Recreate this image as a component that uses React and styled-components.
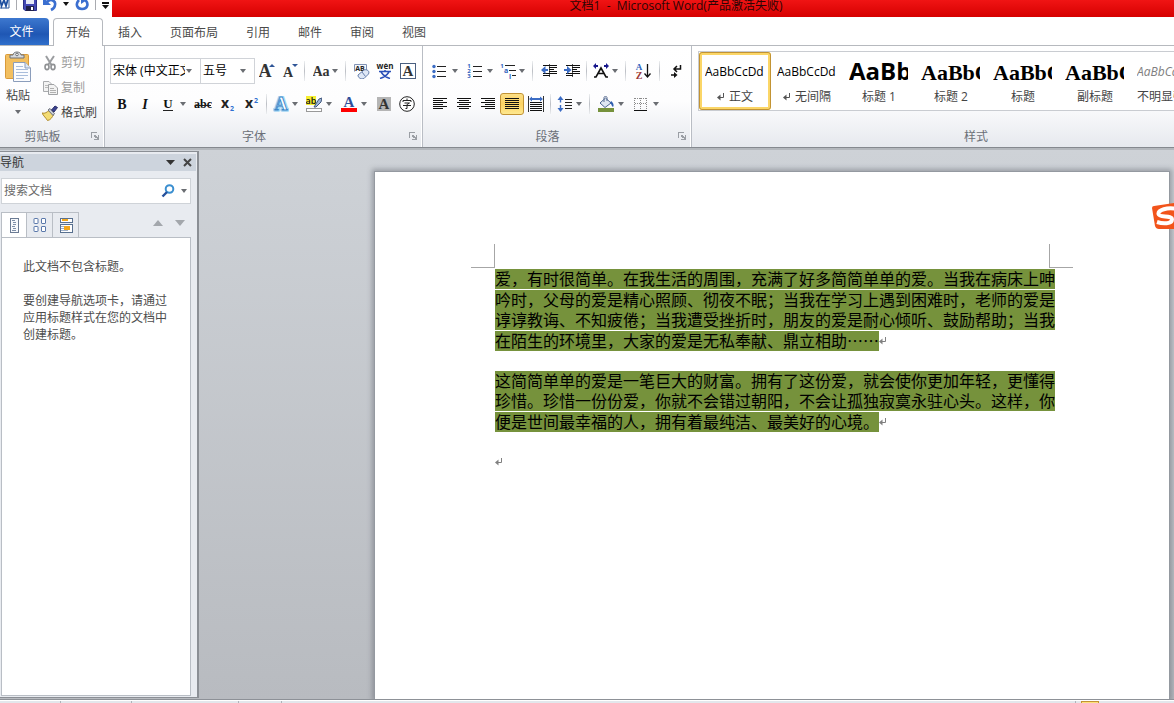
import React from "react";
import styled, { createGlobalStyle, css } from "styled-components";

const UI = `"Open Sans", "Noto Sans CJK SC", sans-serif`;
const SERIF = `"Liberation Serif", serif`;
const SANS = `"Open Sans", sans-serif`;

const GlobalStyle = createGlobalStyle`
  *, *::before, *::after { box-sizing: border-box; }
  html, body, #root { height: 100%; margin: 0; }
  body { font: 12px/16px ${UI}; color: #444; overflow: hidden; }
  button, input, select { font: inherit; color: inherit; }
  p { margin: 0; }
`;

/* ---------- window frame ---------- */

const Window = styled.div`
  display: flex;
  flex-direction: column;
  height: 100vh;
  overflow: hidden;
  background: #fff;
`;

const TitleBar = styled.header`
  display: flex;
  flex: none;
  height: 17px;
  overflow: hidden;
`;

const QuickAccess = styled.div`
  display: flex;
  flex: none;
  width: 112px;
  height: 8px;
  align-items: center;
  gap: 6px;
`;

const QuickButton = styled.button`
  display: block;
  padding: 0;
  border: 0;
  background: none;
  height: 16px;
  flex: none;
`;

const QuickRule = styled.span`
  width: 1px;
  height: 12px;
  background: #a9abb0;
`;

const TitleText = styled.h1`
  flex: 1;
  margin: 0;
  padding-left: 66px;
  background: linear-gradient(#f01414, #d60000);
  color: #2c0505;
  font-size: 12px;
  font-weight: 400;
  line-height: 12px;
  text-align: center;
  white-space: pre;
`;

const TabRow = styled.nav`
  display: flex;
  flex: none;
  gap: 2px;
  height: 29px;
  padding-top: 1px;
  border-bottom: 1px solid #b6b9be;
`;

const Tab = styled.button`
  height: 28px;
  padding: 0 12px;
  border: 1px solid transparent;
  border-bottom: 0;
  border-radius: 4px 4px 0 0;
  background: none;
  color: #4a4a4a;
  line-height: 24px;
  ${(p) => p.$active && css`
    background: #fff;
    border-color: #b6b9be;
  `}
`;

const FileTab = styled(Tab)`
  width: 49px;
  margin-right: 2px;
  padding: 0 6px 0 0;
  height: 27px;
  border: 0;
  border-radius: 0 4px 0 0;
  background: linear-gradient(#3d78cf, #1f57b4 60%, #2f6fcb);
  color: #fff;
`;

/* ---------- ribbon ---------- */

const Ribbon = styled.section`
  display: flex;
  flex: none;
  height: 102px;
  overflow: hidden;
  border-bottom: 1px solid #85898f;
  background: linear-gradient(#fff 0%, #fdfdfe 55%, #e6e9ee 100%);
`;

const Group = styled.section`
  display: flex;
  flex: none;
  flex-direction: column;
  width: ${(p) => p.$width}px;
  border-right: 1px solid #b9bdc4;
  box-shadow: inset -1px 0 #fff;
`;

const GroupBody = styled.div`
  display: flex;
  flex: 1;
  flex-direction: ${(p) => (p.$rows ? "column" : "row")};
  gap: ${(p) => (p.$rows ? 7 : 0)}px;
  padding: ${(p) => p.$pad || "12px 0 0 5px"};
`;

const GroupFoot = styled.footer`
  display: flex;
  height: 21px;
  padding: 0 4px 0 0;
  align-items: center;
  color: #6b7078;
`;

const GroupName = styled.span`
  flex: 1;
  padding-right: 6px;
  text-align: center;
`;

const Launcher = styled.button`
  display: flex;
  width: 9px;
  height: 9px;
  padding: 0;
  border: 0;
  background: none;
`;

const ToolRow = styled.div`
  display: flex;
  height: 26px;
  align-items: center;
`;

const Tool = styled.button`
  display: flex;
  flex: none;
  width: ${(p) => p.$width || 23}px;
  height: 22px;
  padding: 0;
  align-items: center;
  justify-content: center;
  border: 1px solid transparent;
  border-radius: 3px;
  background: none;
  ${(p) => p.$on && css`
    border-color: #c29334;
    background: linear-gradient(#fcdf86, #fdd363 50%, #fee88f);
  `}
`;

const Split = styled.button`
  display: grid;
  flex: none;
  grid-template-columns: ${(p) => (p.$tight ? 20 : 23)}px 8px;
  margin-right: ${(p) => (p.$tight ? 3 : 4)}px;
  height: 22px;
  padding: 0;
  place-items: center;
  border: 0;
  background: none;
`;

const Rule = styled.span`
  flex: none;
  width: 1px;
  height: 20px;
  margin: 0 4px 0 3px;
  background: linear-gradient(#eceef0, #bcbfc5 50%, #eceef0);
`;

const Combo = styled.label`
  display: grid;
  flex: none;
  grid-template-columns: 1fr 14px;
  width: ${(p) => p.$width}px;
  height: 26px;
  align-items: center;
  border: 1px solid #d0d3d8;
  background: #fff;
  & + & { border-left: 0; }
  svg { grid-area: 1 / 2; pointer-events: none; }
`;

const ComboSelect = styled.select`
  grid-area: 1 / 1 / 2 / 3;
  width: 100%;
  height: 24px;
  padding: 0 15px 0 2px;
  appearance: none;
  border: 0;
  background: none;
  color: #000;
`;

const PasteButton = styled.button`
  display: flex;
  flex-direction: column;
  width: 36px;
  height: 74px;
  padding: 1px 0 0;
  align-items: center;
  border: 0;
  background: none;
  line-height: 20px;
  svg + span { margin: 3px 0 4px; }
`;

const ClipList = styled.div`
  display: flex;
  flex-direction: column;
  padding-left: 6px;
`;

const ClipButton = styled.button`
  display: flex;
  height: 25px;
  padding: 0;
  gap: 3px;
  align-items: center;
  border: 0;
  background: none;
  color: ${(p) => (p.disabled ? "#9a9a9a" : "#444")};
`;

const Gallery = styled.div`
  display: flex;
  height: 60px;
  width: 568px;
  border: 1px solid #c9ccd1;
  background: #fff;
`;

const StyleCard = styled.button`
  display: flex;
  flex: none;
  flex-direction: column;
  width: 72px;
  height: 58px;
  padding: 0 3px;
  border: 3px solid transparent;
  border-radius: 3px;
  background: none;
  ${(p) => p.$on && css`
    border-color: #fbd667;
    outline: 1px solid #c29334;
    outline-offset: -1px;
  `}
`;

const Sample = styled.span`
  display: block;
  width: 59px;
  height: 34px;
  overflow: hidden;
  color: #000;
  font-size: 12px;
  line-height: 34px;
  white-space: nowrap;
  text-align: left;
  ${(p) => p.$kind === "h1" && css`
    font: 700 24px/32px ${SANS};
  `}
  ${(p) => p.$kind === "serif" && css`
    font: 700 22px/36px ${SERIF};
  `}
  ${(p) => p.$kind === "subtle" && css`
    color: #808080;
    font-style: italic;
  `}
`;

const StyleName = styled.span`
  display: flex;
  width: 60px;
  height: 16px;
  gap: 4px;
  align-items: center;
  justify-content: center;
  color: #444;
  white-space: nowrap;
`;

/* ---------- workspace ---------- */

const Workspace = styled.main`
  position: relative;
  display: flex;
  flex: 1;
  min-height: 0;
  overflow: hidden;
  background: linear-gradient(#ced2d7, #b8bbc0);
  border-top: 2px solid #b4b8bd;
`;

const NavPane = styled.aside`
  display: flex;
  flex: none;
  flex-direction: column;
  width: 199px;
  margin: 1px 0 1px;
  padding: 2px 6px 1px 1px;
  border: 1px solid #8b8f95;
  border-width: 1px 2px 1px 0;
  background: #e8ebf0;
`;

const NavHead = styled.header`
  display: flex;
  flex: none;
  height: 17px;
  margin: 0 -5px 7px -1px;
  padding-right: 4px;
  gap: 8px;
  align-items: center;
  background: #cdd4dd;
  color: #333;
`;

const NavTitle = styled.h2`
  flex: 1;
  margin: 0;
  font-size: 12px;
  font-weight: 400;
  line-height: 17px;
`;

const IconButton = styled.button`
  display: flex;
  padding: 0;
  border: 0;
  background: none;
`;

const SearchBox = styled.div`
  display: flex;
  flex: none;
  height: 26px;
  padding: 0 3px 0 2px;
  gap: 6px;
  align-items: center;
  border: 1px solid #cfd3d8;
  background: #fff;
`;

const SearchInput = styled.input`
  flex: 1;
  min-width: 0;
  padding: 0;
  border: 0;
  outline: 0;
  background: none;
  &::placeholder { color: #6a6a6a; opacity: 1; }
`;

const NavTabs = styled.div`
  display: flex;
  flex: none;
  height: 26px;
  margin-top: 8px;
  margin-bottom: -1px;
`;

const NavTab = styled.button`
  display: flex;
  width: 26px;
  padding: 0;
  align-items: center;
  justify-content: center;
  border: 1px solid #b9bec5;
  border-bottom-color: ${(p) => (p.$on ? "#fff" : "#b9bec5")};
  background: ${(p) => (p.$on ? "#fff" : "#e8ebf0")};
  & + & { border-left: 0; }
`;

const NavArrows = styled.div`
  display: flex;
  flex: 1;
  gap: 12px;
  padding: 0 6px 4px 0;
  align-items: center;
  justify-content: flex-end;
`;

const NavBody = styled.div`
  flex: 1;
  padding: 20px 20px 0 21px;
  border: 1px solid #b9bec5;
  background: #fff;
  color: #4d4d4d;
  line-height: 17px;
  p + p { margin-top: 17px; }
`;

const Sheet = styled.article`
  flex: 1;
  min-width: 0;
  margin: 21px 4px 0 175px;
  padding-top: 72px;
  border: 1px solid #9499a0;
  border-bottom: 0;
  border-width: 1px 1px 0 1px;
  background: #fff;
  box-shadow: 0 0 5px 2px rgba(90, 96, 105, 0.45);
`;

const Marks = styled.div`
  display: flex;
  margin: 0 96px 1px;
  justify-content: space-between;
`;

const Mark = styled.span`
  width: 24px;
  height: 24px;
  border: solid #a6a6a6;
  border-width: ${(p) => (p.$right ? "0 0 1px 1px" : "0 1px 1px 0")};
`;

const Text = styled.div`
  padding: 0 120px;
  color: #000;
  font: 16px/20px "Noto Sans CJK SC", sans-serif;
`;

const Paragraph = styled.p`
  min-height: 20px;
  margin-bottom: 20px;
`;

const Line = styled.span`
  display: flex;
  align-items: center;
  height: 20px;
  margin-top: ${(p) => (p.$split ? 1 : 0)}px;
  white-space: nowrap;
`;

const Highlight = styled.span`
  padding-bottom: 2px;
  background: #76923c;
  line-height: 18px;
`;

const InputBadge = styled.span`
  position: absolute;
  top: 51px;
  right: 0;
  width: 23px;
  height: 30px;
  overflow: hidden;
`;

const StatusBar = styled.footer`
  display: flex;
  flex: none;
  height: 4px;
  padding-top: 1px;
  border-top: 1px solid #8d9197;
  background: #e3e7ec;
  box-shadow: inset 0 1px #fff;
`;

const StatusCell = styled.span`
  flex: none;
  width: ${(p) => p.$width}px;
  border-right: 1px solid #aeb3b9;
`;

const StatusSpace = styled(StatusCell)`
  flex: 1;
`;

const ViewSwitch = styled.span`
  width: 18px;
  margin: 0 75px 0 5px;
  border: 1px solid #c29334;
  border-bottom: 0;
  background: #fde27a;
`;

/* ---------- drawings ---------- */

const Svg = ({ w = 16, h = 16, crisp, children }) => (
  <svg width={w} height={h} viewBox={`0 0 ${w} ${h}`} fill="none" aria-hidden="true"
    shapeRendering={crisp ? "crispEdges" : "auto"}>
    {children}
  </svg>
);

const Caret = ({ color = "#6a6d72", w = 6, h = 4 }) => (
  <Svg w={w} h={h}><path d={`M0 0H${w}L${w / 2} ${h}Z`} fill={color} /></Svg>
);

const Letter = ({ x = 8, y = 13, size = 15, fill = "#333", font = SERIF, weight = 700, children, ...rest }) => (
  <text x={x} y={y} fontSize={size} fill={fill} fontFamily={font} fontWeight={weight} textAnchor="middle" {...rest}>
    {children}
  </text>
);

const WordLogo = () => (
  <Svg w={10}>
    <path d="M0 1H9V12H0" fill="#fff" stroke="#2b579a" />
    <path d="M0 3L1.500 10L4 4L6 10L8 3" stroke="#1d4f9f" strokeWidth="1.800" />
  </Svg>
);
const SaveIcon = () => (
  <Svg w={14}>
    <path d="M0.500 1H13.500V14.500H2L0.500 13Z" fill="#4348b4" stroke="#2b2f86" />
    <rect x="3" y="1" width="8" height="7" fill="#e6e9f7" />
    <rect x="3" y="10" width="8" height="5" fill="#20204a" />
    <rect x="8" y="11" width="2" height="3" fill="#fff" />
  </Svg>
);
const UndoIcon = () => (
  <Svg w={14}>
    <path d="M4 6C8 2 13 5 12 9C12 11 10 13 8 14" stroke="#3b6fd0" strokeWidth="2.600" />
    <path d="M0 1V9H8Z" fill="#3b6fd0" />
  </Svg>
);
const RedoIcon = () => (
  <Svg w={14}>
    <path d="M4 4C0 8 2 13 7 13C13 13 14 7 10 4" stroke="#3b6fd0" strokeWidth="2.600" />
    <path d="M6 1V8L12 4Z" fill="#3b6fd0" />
  </Svg>
);
const MoreIcon = () => (
  <Svg w={7} h={16}><path d="M0 6H7V8H0ZM0 9H7L3.500 13Z" fill="#111" /></Svg>
);

const PasteIcon = () => (
  <Svg w={28} h={32}>
    <rect x="1.500" y="3.500" width="23" height="24" rx="1" fill="#f2bf60" stroke="#d99a3a" />
    <path d="M6 7V4H9C9 0 17 0 17 4H20V7Z" fill="#d7dade" stroke="#6d7176" />
    <circle cx="13" cy="3.500" r="1.300" fill="#fff" stroke="#6d7176" />
    <path d="M9.500 11.500H21L26.500 17V30.500H9.500Z" fill="#fbfcfe" stroke="#8b9dbb" />
    <path d="M21 11.500V17H26.500" fill="#dce6f4" stroke="#8b9dbb" />
    <path d="M12 15.500H19M12 18.500H24M12 21.500H24M12 24.500H24M12 27.500H20" stroke="#a9bddb" />
  </Svg>
);
const CutIcon = () => (
  <Svg>
    <path d="M4 1L9.500 10M12 1L6 10" stroke="#9b9da0" strokeWidth="2" />
    <ellipse cx="5" cy="12" rx="2" ry="2.600" stroke="#8f9194" strokeWidth="1.600" />
    <ellipse cx="11" cy="12" rx="2" ry="2.600" stroke="#8f9194" strokeWidth="1.600" />
  </Svg>
);
const CopyIcon = () => (
  <Svg>
    <path d="M1.500 1.500H7L9.500 4V11.500H1.500Z" fill="#f3f3f3" stroke="#a9abae" />
    <path d="M3 5.500H8M3 7.500H8" stroke="#bbb" />
    <path d="M6.500 4.500H12L15.500 8V14.500H6.500Z" fill="#f3f3f3" stroke="#a0a2a5" />
    <path d="M8 8.500H12M8 10.500H14M8 12.500H14" stroke="#b0b0b0" />
  </Svg>
);
const BrushIcon = () => (
  <Svg>
    <path d="M0 8C3 9 5 7 7 5.500L11.500 10C10 12 9 15 5.500 15.500C4 13 1.500 11 0 8Z" fill="#f3dc74" stroke="#b08b2c" />
    <path d="M6 5L8 3.500L12.500 8.500L11 10.500Z" fill="#c8ccd4" stroke="#6b6f7a" />
    <path d="M9.500 5L13 1L15.500 2.500L12 7Z" fill="#3a418f" stroke="#2b2f6a" />
  </Svg>
);
const LaunchIcon = () => (
  <Svg w={9} h={9} crisp>
    <path d="M0 6V0H6V1H1V6ZM3 3H5V4H6V5H7V3H8V8H3V7H6V6H4V5H3Z" fill="#9a9ea4" />
  </Svg>
);

const GrowIcon = ({ small }) => (
  <Svg>
    <Letter x={6} y={14} size={small ? 14 : 18}>A</Letter>
    <path d={small ? "M10 1H16L13 4Z" : "M10 4H16L13 1Z"} fill="#2f5597" />
  </Svg>
);
const CaseIcon = () => (
  <Svg w={26}>
    <Letter x={8} y={13} size={14}>Aa</Letter>
    <path d="M19 6H25L22 10Z" fill="#6a6d72" />
  </Svg>
);
const ClearIcon = () => (
  <Svg w={17}>
    <path d="M1.500 8.500V1.500H13.500V7" stroke="#8193b5" fill="#f4f7fc" />
    <Letter x={7} y={8} size={7} font={SANS} fill="#222">AB</Letter>
    <path d="M5 12L11 7C14 6 17 8 15.500 11L11 15.500C8 16.500 5 15 5 12Z" fill="#dfe8f6" stroke="#6780ac" />
    <path d="M9 9L12.500 13.500" stroke="#6780ac" />
  </Svg>
);
const PhoneticIcon = () => (
  <Svg w={18}>
    <Letter x={9} y={6} size={8} font={SANS} fill="#222">wén</Letter>
    <path d="M3 8.500H15M9 7V8M5 9C7 12 9 14 14 15.500M13 9C11 12 9 14 4 15.500" stroke="#2b50b8" strokeWidth="1.500" />
  </Svg>
);
const BorderLetterIcon = () => (
  <Svg><rect x="0.500" y="0.500" width="15" height="15" fill="#fff" stroke="#4a5f80" /><Letter>A</Letter></Svg>
);
const BoldIcon = () => <Svg><Letter size={14} fill="#111">B</Letter></Svg>;
const ItalicIcon = () => <Svg><Letter size={14} fill="#111" fontStyle="italic">I</Letter></Svg>;
const UnderlineIcon = () => (
  <Svg><Letter size={13} y={12} fill="#111">U</Letter><path d="M3 14.500H13" stroke="#222" /></Svg>
);
const StrikeIcon = () => (
  <Svg w={18}><Letter x={9} y={12} size={12} fill="#111">abc</Letter><path d="M1 9.500H17" stroke="#222" /></Svg>
);
const ScriptIcon = ({ sup }) => (
  <Svg>
    <Letter x={6} y={12} size={14} font={SANS} fill="#222">x</Letter>
    <Letter x={13} y={sup ? 7 : 15} size={7} font={SANS} fill="#2f6fd0">2</Letter>
  </Svg>
);
const GlowIcon = () => (
  <Svg>
    <Letter y={14} size={18} fill="#b7dcf5" stroke="#a6d6f3" strokeWidth="3.500" strokeLinejoin="round">A</Letter>
    <Letter y={14} size={18} fill="#fff" stroke="#3c86c8" strokeWidth="0.900">A</Letter>
  </Svg>
);
const MarkerIcon = () => (
  <Svg>
    <rect width="10" height="9" fill="#f6ee2f" />
    <Letter x={5} y={8} size={9} font={SANS} fill="#111" weight={600}>ab</Letter>
    <path d="M8 11L13 3L16 2L15 6L10 11Z" fill="#9fb6d8" stroke="#42597f" />
    <rect x="0.500" y="12.500" width="15" height="3" fill="#fff" stroke="#999" />
  </Svg>
);
const ColorIcon = () => (
  <Svg><Letter y={11} size={15} fill="#2f4f9b">A</Letter><rect y="12" width="16" height="4" fill="#f00" /></Svg>
);
const ShadeLetterIcon = () => (
  <Svg><rect x="1" y="1" width="14" height="14" fill="#b5b5b5" /><Letter y={13} size={15}>A</Letter></Svg>
);
const CircleIcon = () => (
  <Svg>
    <circle cx="8" cy="8" r="7.300" fill="#fff" stroke="#222" />
    <path d="M8 2.500V4M4 6V4.500H12V6M5.500 7H10.500L8 8.500V12.500H6.500M4 9.500H12" stroke="#222" />
  </Svg>
);

const BulletsIcon = () => (
  <Svg>
    <path d="M5 3.500H14M5 8.500H14M5 13.500H14" stroke="#222" />
    <circle cx="2" cy="3.500" r="1.700" fill="#3b6cc4" />
    <circle cx="2" cy="8.500" r="1.700" fill="#3b6cc4" />
    <circle cx="2" cy="13.500" r="1.700" fill="#3b6cc4" />
  </Svg>
);
const NumbersIcon = () => (
  <Svg>
    <path d="M6 3.500H15M6 8.500H15M6 13.500H15" stroke="#222" />
    {[1, 2, 3].map((n) => (
      <Letter key={n} x={2} y={n * 5} size={6} font={SANS} fill="#2f62bd">{n}</Letter>
    ))}
  </Svg>
);
const LevelsIcon = () => (
  <Svg>
    <path d="M5 2.500H15M9 7.500H16M12 12.500H16" stroke="#222" />
    <Letter x={2} y={5} size={6} font={SANS} fill="#2f62bd">1</Letter>
    <Letter x={6} y={10} size={7} font={SANS} fill="#2f62bd">a</Letter>
    <Letter x={10} y={16} size={7} font={SANS} fill="#2f62bd">i</Letter>
  </Svg>
);
const IndentIcon = ({ inc }) => (
  <Svg>
    <path d="M2 2.500H16M8 4.500H16M8 6.500H13M8 8.500H16M2 10.500H16M2 12.500H9" stroke="#111" />
    <path d="M8.500 1V15" stroke="#555" strokeDasharray="1 1" />
    <path d={inc ? "M0 6H3V3L7.500 7L3 11V8H0Z" : "M7 6H4.500V3L0 7L4.500 11V8H7Z"} fill="#3b6cc4" />
  </Svg>
);
const AsianIcon = () => (
  <Svg>
    <path d="M1 14H3L8 5L13 14H15M5 10.500H11" stroke="#111" strokeWidth="1.600" />
    <path d="M0 3L3 0V2H5V4H3V6ZM16 3L13 0V2H11V4H13V6Z" fill="#16168c" />
  </Svg>
);
const SortIcon = () => (
  <Svg>
    <Letter x={4} y={7} size={9} fill="#2f62bd">A</Letter>
    <Letter x={4} y={16} size={10} fill="#9c3838">Z</Letter>
    <path d="M12.500 1V14M9.500 10.500L12.500 14L15.500 10.500" stroke="#111" strokeWidth="1.300" />
  </Svg>
);
const ShowMarksIcon = () => (
  <Svg>
    <path d="M12.500 2V6H6M9 3L6 6L9 9M3 12H8" stroke="#111" strokeWidth="1.500" />
    <path d="M6 9L9.500 12L6 15Z" fill="#111" />
  </Svg>
);
const lineSets = {
  left: [[1, 15], [1, 11], [1, 15], [1, 11], [1, 15], [1, 11]],
  center: [[1, 15], [3, 13], [1, 15], [3, 13], [1, 15], [3, 13]],
  right: [[1, 15], [5, 15], [1, 15], [5, 15], [1, 15], [5, 15]],
  full: [[1, 15], [1, 15], [1, 15], [1, 15], [1, 15], [1, 15]],
};
const AlignIcon = ({ kind }) => (
  <Svg crisp>
    {lineSets[kind].map(([a, b], i) => (
      <rect key={i} x={a} y={2 + i * 2} width={b - a} height="1" fill="#111" />
    ))}
  </Svg>
);
const DistributeIcon = () => (
  <Svg>
    <path d="M0.500 0V16M15.500 0V16" stroke="#333" />
    <path d="M2 6.500H14M2 8.500H14M2 10.500H14M2 12.500H14M2 14.500H14" stroke="#111" />
    <path d="M1 3L4 0.500V2H12V0.500L15 3L12 5.500V4H4V5.500Z" fill="#3b6cc4" />
  </Svg>
);
const SpacingIcon = () => (
  <Svg>
    <path d="M8 3.500H15M8 6.500H15M8 9.500H15M8 12.500H15" stroke="#222" />
    <path d="M0.500 4L3.500 0L6.500 4H4.200V6.500H2.800V4ZM0.500 12L3.500 16L6.500 12H4.200V9H2.800V12Z" fill="#3b6cc4" />
  </Svg>
);
const BucketIcon = () => (
  <Svg>
    <path d="M2 7L7.500 2L13 7L7 11.500Z" fill="#dfe7f2" stroke="#4c6590" />
    <path d="M6 6V1.500C6 0 9 0 9 1.500V5" stroke="#5b6f93" />
    <path d="M13 5C16 7 16 10 15 11C13 10 14 8 12 7Z" fill="#2f5fb0" />
    <rect y="12" width="16" height="4" fill="#76923c" />
  </Svg>
);
const BordersIcon = () => (
  <Svg crisp>
    <path d="M2 2.500H14M2 7.500H14M1.500 2V14M7.500 2V14M13.500 2V14" stroke="#8a8a8a" strokeDasharray="1 1" />
    <path d="M1 14.500H14" stroke="#111" />
  </Svg>
);
const ReturnMark = ({ color = "#808080" }) => (
  <Svg w={8} h={10}>
    <path d="M6.500 1V5.500H2" stroke={color} />
    <path d="M0 5.500L3.500 2.500V8.500Z" fill={color} />
  </Svg>
);

const SearchIcon = () => (
  <Svg w={14} h={14}>
    <circle cx="8.500" cy="5" r="3.800" stroke="#3b8fd0" strokeWidth="2" />
    <path d="M6 8L1.500 12.500" stroke="#25509c" strokeWidth="2.400" />
  </Svg>
);
const CloseIcon = () => (
  <Svg w={9} h={9}><path d="M1 1L8 8M8 1L1 8" stroke="#444" strokeWidth="2" /></Svg>
);
const OutlineIcon = () => (
  <Svg w={11} h={16} crisp>
    <rect x="1" y="1" width="8" height="14" fill="#f7f9fc" stroke="#6b7b94" />
    <path d="M3 3.500H6M4 5.500H7M4 7.500H7M3 9.500H6M4 11.500H7M3 13H7" stroke="#7f8fa8" />
  </Svg>
);
const PagesIcon = () => (
  <Svg w={14} h={16}>
    {[[1, 1.5], [8.5, 1.5], [1, 9.5], [8.5, 9.5]].map(([x, y]) => (
      <rect key={`${x}-${y}`} x={x} y={y} width="4" height="5" rx="0.500" fill="#fff" stroke="#5b79ab" />
    ))}
  </Svg>
);
const ResultsIcon = () => (
  <Svg w={14} h={16} crisp>
    <rect x="1" y="1" width="12" height="4" fill="#fff" stroke="#58708f" />
    <rect x="3" y="2" width="6" height="2" fill="#f3a71a" />
    <rect x="1" y="7" width="12" height="8" fill="#fff" stroke="#58708f" />
    <rect x="5" y="9" width="6" height="4" fill="#f3a71a" />
    <path d="M2 9.500H5M2 11.500H5M2 13.500H9" stroke="#9fb0c8" />
  </Svg>
);
const Triangle = ({ up }) => (
  <Svg w={10} h={6}><path d={up ? "M0 6H10L5 0Z" : "M0 0H10L5 6Z"} fill="#a3a7ac" /></Svg>
);
const BadgeIcon = () => (
  <Svg w={30} h={30}>
    <path d="M3 5Q1 5 1 7L4 25Q5 28 8 28H30V1Z" fill="#f2541b" />
    <path d="M26 8C16 6 7 9 7.500 13C8 17 21 14 21 18.500C21 23 12 23 6 21" stroke="#fff" strokeWidth="4" />
  </Svg>
);

/* ---------- content ---------- */

const ribbonTabs = ["开始", "插入", "页面布局", "引用", "邮件", "审阅", "视图"];

const styleCards = [
  { name: "正文", sample: "AaBbCcDd", kind: "body", mark: true, on: true },
  { name: "无间隔", sample: "AaBbCcDd", kind: "body", mark: true },
  { name: "标题 1", sample: "AaBb", kind: "h1" },
  { name: "标题 2", sample: "AaBbC", kind: "serif" },
  { name: "标题", sample: "AaBbC", kind: "serif" },
  { name: "副标题", sample: "AaBbC", kind: "serif" },
  { name: "不明显强调", sample: "AaBbCcDd", kind: "subtle" },
];

const paragraphs = [
  [
    { text: "爱，有时很简单。在我生活的周围，充满了好多简简单单的爱。当我在病床上呻" },
    { text: "吟时，父母的爱是精心照顾、彻夜不眠；当我在学习上遇到困难时，老师的爱是", split: true },
    { text: "谆谆教诲、不知疲倦；当我遭受挫折时，朋友的爱是耐心倾听、鼓励帮助；当我" },
    { text: "在陌生的环境里，大家的爱是无私奉献、鼎立相助……", split: true },
  ],
  [
    { text: "这简简单单的爱是一笔巨大的财富。拥有了这份爱，就会使你更加年轻，更懂得" },
    { text: "珍惜。珍惜一份份爱，你就不会错过朝阳，不会让孤独寂寞永驻心头。这样，你" },
    { text: "便是世间最幸福的人，拥有着最纯洁、最美好的心境。", split: true },
  ],
  [{ text: "" }],
];

const ToolButton = ({ label, icon, ...rest }) => (
  <Tool type="button" aria-label={label} {...rest}>{icon}</Tool>
);
const SplitButton = ({ label, icon, tight }) => (
  <Split type="button" aria-label={label} $tight={tight}>{icon}<Caret /></Split>
);
const Foot = ({ name, launcher = true }) => (
  <GroupFoot>
    <GroupName>{name}</GroupName>
    {launcher && <Launcher type="button" aria-label={`${name}选项`}><LaunchIcon /></Launcher>}
  </GroupFoot>
);

function ClipboardGroup() {
  return (
    <Group $width={105}>
      <GroupBody $pad="4px 0 0">
        <PasteButton type="button"><PasteIcon /><span>粘贴</span><Caret /></PasteButton>
        <ClipList>
          <ClipButton type="button" disabled><CutIcon />剪切</ClipButton>
          <ClipButton type="button" disabled><CopyIcon />复制</ClipButton>
          <ClipButton type="button"><BrushIcon />格式刷</ClipButton>
        </ClipList>
      </GroupBody>
      <Foot name="剪贴板" />
    </Group>
  );
}

function FontGroup() {
  return (
    <Group $width={318}>
      <GroupBody $rows>
        <ToolRow>
          <Combo $width={91}>
            <ComboSelect aria-label="字体"><option>宋体 (中文正文)</option></ComboSelect>
            <Caret />
          </Combo>
          <Combo $width={54}>
            <ComboSelect aria-label="字号"><option>五号</option></ComboSelect>
            <Caret />
          </Combo>
          <ToolButton label="增大字体" icon={<GrowIcon />} />
          <ToolButton label="缩小字体" icon={<GrowIcon small />} />
          <Rule />
          <ToolButton label="更改大小写" icon={<CaseIcon />} $width={33} />
          <Rule />
          <ToolButton label="清除格式" icon={<ClearIcon />} />
          <ToolButton label="拼音指南" icon={<PhoneticIcon />} />
          <ToolButton label="字符边框" icon={<BorderLetterIcon />} />
        </ToolRow>
        <ToolRow>
          <ToolButton label="加粗" icon={<BoldIcon />} />
          <ToolButton label="倾斜" icon={<ItalicIcon />} />
          <SplitButton label="下划线" icon={<UnderlineIcon />} />
          <ToolButton label="删除线" icon={<StrikeIcon />} $width={24} />
          <ToolButton label="下标" icon={<ScriptIcon />} $width={24} />
          <ToolButton label="上标" icon={<ScriptIcon sup />} $width={24} />
          <Rule />
          <SplitButton label="文本效果" icon={<GlowIcon />} tight />
          <SplitButton label="突出显示" icon={<MarkerIcon />} />
          <SplitButton label="字体颜色" icon={<ColorIcon />} />
          <ToolButton label="字符底纹" icon={<ShadeLetterIcon />} />
          <ToolButton label="带圈字符" icon={<CircleIcon />} />
        </ToolRow>
      </GroupBody>
      <Foot name="字体" />
    </Group>
  );
}

function ParagraphGroup() {
  return (
    <Group $width={269}>
      <GroupBody $rows>
        <ToolRow>
          <SplitButton label="项目符号" icon={<BulletsIcon />} />
          <SplitButton label="编号" icon={<NumbersIcon />} />
          <SplitButton label="多级列表" icon={<LevelsIcon />} tight />
          <Rule />
          <ToolButton label="减少缩进量" icon={<IndentIcon />} />
          <ToolButton label="增加缩进量" icon={<IndentIcon inc />} />
          <Rule />
          <SplitButton label="中文版式" icon={<AsianIcon />} tight />
          <Rule />
          <ToolButton label="排序" icon={<SortIcon />} $width={26} />
          <Rule />
          <ToolButton label="显示编辑标记" icon={<ShowMarksIcon />} $width={24} />
        </ToolRow>
        <ToolRow>
          <ToolButton label="左对齐" icon={<AlignIcon kind="left" />} $width={24} />
          <ToolButton label="居中" icon={<AlignIcon kind="center" />} $width={24} />
          <ToolButton label="右对齐" icon={<AlignIcon kind="right" />} $width={24} />
          <ToolButton label="两端对齐" icon={<AlignIcon kind="full" />} $width={24} $on />
          <ToolButton label="分散对齐" icon={<DistributeIcon />} />
          <Rule />
          <SplitButton label="行距" icon={<SpacingIcon />} tight />
          <Rule />
          <SplitButton label="底纹" icon={<BucketIcon />} />
          <SplitButton label="边框" icon={<BordersIcon />} />
        </ToolRow>
      </GroupBody>
      <Foot name="段落" />
    </Group>
  );
}

function StylesGroup() {
  return (
    <Group $width={579}>
      <GroupBody $pad="5px 0 0 6px">
        <Gallery>
          {styleCards.map((card) => (
            <StyleCard type="button" key={card.name} $on={card.on}>
              <Sample $kind={card.kind}>{card.sample}</Sample>
              <StyleName>
                {card.mark && <ReturnMark color="#555" />}
                <span>{card.name}</span>
              </StyleName>
            </StyleCard>
          ))}
        </Gallery>
      </GroupBody>
      <Foot name="样式" launcher={false} />
    </Group>
  );
}

function Navigation() {
  return (
    <NavPane>
      <NavHead>
        <NavTitle>导航</NavTitle>
        <IconButton type="button" aria-label="窗格选项"><Caret color="#333" w={9} h={5} /></IconButton>
        <IconButton type="button" aria-label="关闭"><CloseIcon /></IconButton>
      </NavHead>
      <SearchBox>
        <SearchInput type="text" aria-label="搜索文档" placeholder="搜索文档" />
        <IconButton type="button" aria-label="搜索"><SearchIcon /></IconButton>
        <IconButton type="button" aria-label="搜索选项"><Caret /></IconButton>
      </SearchBox>
      <NavTabs>
        <NavTab type="button" aria-label="浏览标题" $on><OutlineIcon /></NavTab>
        <NavTab type="button" aria-label="浏览页面"><PagesIcon /></NavTab>
        <NavTab type="button" aria-label="浏览结果"><ResultsIcon /></NavTab>
        <NavArrows>
          <IconButton type="button" aria-label="上一处"><Triangle up /></IconButton>
          <IconButton type="button" aria-label="下一处"><Triangle /></IconButton>
        </NavArrows>
      </NavTabs>
      <NavBody>
        <p>此文档不包含标题。</p>
        <p>要创建导航选项卡，请通过应用标题样式在您的文档中创建标题。</p>
      </NavBody>
    </NavPane>
  );
}

export default function App() {
  return (
    <Window>
      <GlobalStyle />
      <TitleBar>
        <QuickAccess>
          <QuickButton type="button" aria-label="Word"><WordLogo /></QuickButton>
          <QuickRule />
          <QuickButton type="button" aria-label="保存"><SaveIcon /></QuickButton>
          <QuickButton type="button" aria-label="撤消"><UndoIcon /></QuickButton>
          <Caret color="#111" />
          <QuickButton type="button" aria-label="重复"><RedoIcon /></QuickButton>
          <QuickRule />
          <QuickButton type="button" aria-label="自定义"><MoreIcon /></QuickButton>
        </QuickAccess>
        <TitleText>{"文档1  -  Microsoft Word(产品激活失败)"}</TitleText>
      </TitleBar>
      <TabRow>
        <FileTab type="button">文件</FileTab>
        {ribbonTabs.map((name, i) => (
          <Tab type="button" key={name} $active={i === 0}>{name}</Tab>
        ))}
      </TabRow>
      <Ribbon>
        <ClipboardGroup />
        <FontGroup />
        <ParagraphGroup />
        <StylesGroup />
      </Ribbon>
      <Workspace>
        <Navigation />
        <Sheet>
          <Marks><Mark /><Mark $right /></Marks>
          <Text>
            {paragraphs.map((lines, p) => (
              <Paragraph key={p}>
                {lines.map((line, i) => (
                  <Line key={i} $split={line.split}>
                    {line.text && <Highlight>{line.text}</Highlight>}
                    {i === lines.length - 1 && <ReturnMark />}
                  </Line>
                ))}
              </Paragraph>
            ))}
          </Text>
        </Sheet>
        <InputBadge><BadgeIcon /></InputBadge>
      </Workspace>
      <StatusBar>
        <StatusCell $width={61} />
        <StatusCell $width={71} />
        <StatusCell $width={107} />
        <StatusCell $width={43} />
        <StatusSpace />
        <ViewSwitch />
      </StatusBar>
    </Window>
  );
}
